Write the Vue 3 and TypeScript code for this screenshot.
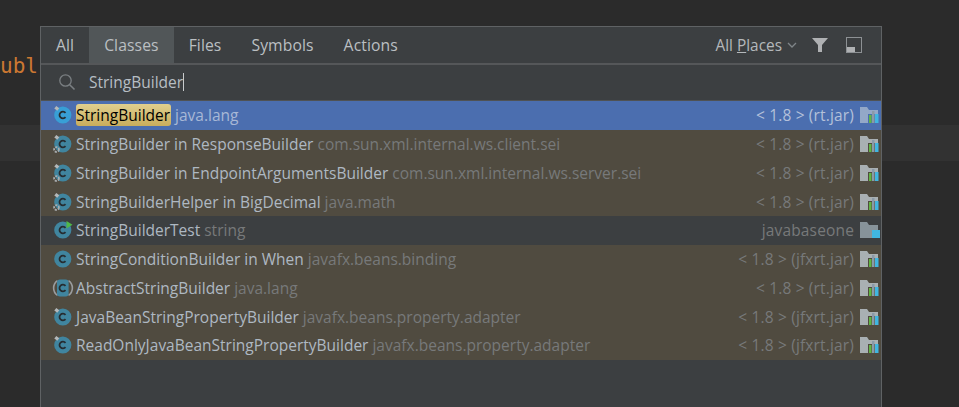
<template>
  <div class="editor">
    <div class="editor__code"><span class="editor__keyword">ubl</span></div>
    <div class="editor__caret-row"></div>

    <div class="popup">
      <header class="popup__tabs">
        <button
          v-for="tab in tabs"
          :key="tab"
          class="tab"
          :class="{ 'tab--active': tab === 'Classes' }"
        >
          {{ tab }}
        </button>
        <div class="popup__tools">
          <span class="scope">All <u>P</u>laces</span>
          <svg class="scope__chevron" width="10" height="6" viewBox="0 0 10 6">
            <path d="M1 1l4 4 4-4" fill="none" stroke="#7f8588" stroke-width="1.3" />
          </svg>
          <svg class="tool-filter" width="16" height="16" viewBox="0 0 16 16">
            <path d="M0 1h16l-6 7v7H6V8z" fill="#afb1b3" />
          </svg>
          <svg class="tool-pin" width="16" height="16" viewBox="0 0 16 16">
            <rect x="0.5" y="0.5" width="15" height="15" fill="none" stroke="#8d9194" />
            <rect x="1" y="10" width="8" height="5" fill="#afb1b3" />
          </svg>
        </div>
      </header>

      <div class="popup__search">
        <svg width="18" height="18" viewBox="0 0 18 18">
          <circle cx="7.5" cy="7.5" r="5.7" fill="none" stroke="#7a7f82" stroke-width="1.3" />
          <path d="M11.7 11.7l4.8 4.8" stroke="#7a7f82" stroke-width="1.6" />
        </svg>
        <span class="popup__query">StringBuilder</span><span class="popup__cursor"></span>
      </div>

      <ul class="results">
        <li
          v-for="row in rows"
          :key="row.name + row.where"
          class="result"
          :class="{
            'result--selected': row.selected,
            'result--project': row.project,
          }"
        >
          <svg class="result__icon" width="22" height="20" viewBox="0 0 22 20">
            <template v-if="row.abstract">
              <path d="M5.5 2.6a9 9 0 0 0 0 14.8M16.5 2.6a9 9 0 0 1 0 14.8" fill="none" stroke="#9a9c9e" stroke-width="1.6" />
              <rect x="5" y="1.5" width="11.6" height="17" rx="3" fill="#40859f" />
            </template>
            <circle v-else cx="10.8" cy="10" r="8.6" :fill="row.selected ? '#389fd6' : '#40859f'" />
            <path d="M13.5 7.8a3.4 3.4 0 1 0 0 4.4" fill="none" stroke="#262c30" stroke-width="1.8" />
            <path v-if="row.project" d="M14.5 1v7.4l6-3.7z" fill="#50b848" />
            <path v-else-if="row.pinned" d="M2.3 3.5l2-2.4 3 2.2-2 2.4z" fill="#b4b8ba" />
            <circle v-if="row.inner" cx="4.5" cy="15.5" r="2.4" fill="none" stroke="#a9adaf" stroke-width="1.8" stroke-dasharray="2 1" />
          </svg>
          <span class="result__name">
            <mark v-if="row.selected" class="result__match">{{ row.name }}</mark>
            <template v-else>{{ row.name }}</template>
          </span>
          <span class="result__where">{{ row.where }}</span>
          <span class="result__lib">{{ row.lib }}</span>
          <svg class="result__folder" width="20" height="20" viewBox="0 0 20 20">
            <path
              d="M0 2h7l2 3h9v13H0z"
              :fill="row.project ? '#87939a' : row.selected ? '#93a8c8' : '#a9b0b3'"
            />
            <rect v-if="row.project" x="12" y="10" width="8" height="8" fill="#40b6e0" />
            <template v-else>
              <rect x="8" y="9" width="12" height="9" :fill="row.selected ? '#4b6eaf' : '#504b40'" />
              <rect x="9" y="10" width="2.5" height="8" fill="#62b543" />
              <rect x="12" y="6" width="2.5" height="12" fill="#8a9aa8" />
              <rect x="15" y="9" width="3.5" height="9" fill="#40b6e0" />
            </template>
          </svg>
        </li>
      </ul>
    </div>
  </div>
</template>

<script setup lang="ts">
type Row = {
  name: string;
  where: string;
  lib: string;
  selected?: boolean;
  project?: boolean;
  abstract?: boolean;
  pinned?: boolean;
  inner?: boolean;
};

const tabs = ['All', 'Classes', 'Files', 'Symbols', 'Actions'];

const rows: Row[] = [
  { name: 'StringBuilder', where: 'java.lang', lib: '< 1.8 > (rt.jar)', selected: true, pinned: true },
  { name: 'StringBuilder in ResponseBuilder', where: 'com.sun.xml.internal.ws.client.sei', lib: '< 1.8 > (rt.jar)', pinned: true, inner: true },
  { name: 'StringBuilder in EndpointArgumentsBuilder', where: 'com.sun.xml.internal.ws.server.sei', lib: '< 1.8 > (rt.jar)', pinned: true, inner: true },
  { name: 'StringBuilderHelper in BigDecimal', where: 'java.math', lib: '< 1.8 > (rt.jar)', pinned: true, inner: true },
  { name: 'StringBuilderTest', where: 'string', lib: 'javabaseone', project: true },
  { name: 'StringConditionBuilder in When', where: 'javafx.beans.binding', lib: '< 1.8 > (jfxrt.jar)' },
  { name: 'AbstractStringBuilder', where: 'java.lang', lib: '< 1.8 > (rt.jar)', abstract: true },
  { name: 'JavaBeanStringPropertyBuilder', where: 'javafx.beans.property.adapter', lib: '< 1.8 > (jfxrt.jar)', pinned: true },
  { name: 'ReadOnlyJavaBeanStringPropertyBuilder', where: 'javafx.beans.property.adapter', lib: '< 1.8 > (jfxrt.jar)', pinned: true },
];
</script>

<style>
html,
body {
  margin: 0;
  background: #2b2b2b;
  overflow: hidden;
}
</style>

<style scoped>
.editor {
  position: relative;
  width: 959px;
  height: 407px;
  overflow: hidden;
  background: #2b2b2b;
  font-family: "Open Sans", "Liberation Sans", sans-serif;
}
.editor__code {
  height: 27px;
  padding-top: 53px;
  font-family: "DejaVu Sans Mono", monospace;
  font-size: 21px;
  line-height: 27px;
}
.editor__keyword {
  color: #cc7832;
}
.editor__caret-row {
  height: 36px;
  margin-top: 45px;
  background: #323232;
}
.popup {
  position: absolute;
  left: 40px;
  top: 26px;
  width: 840px;
  height: 381px;
  display: flex;
  flex-direction: column;
  background: #3c3f41;
  border: solid #5f6264;
  border-width: 1px 1px 0;
}
.popup__tabs {
  display: flex;
  align-items: stretch;
  height: 36px;
  border-bottom: 2px solid #555759;
  flex: none;
}
.tab {
  padding: 0 15px;
  border: 0;
  background: none;
  color: #bbbfc2;
  font: inherit;
  font-size: 15.7px;
  letter-spacing: 0.1px;
}
.tab--active {
  background: #515658;
}
.popup__tools {
  margin-left: auto;
  display: flex;
  align-items: center;
  color: #b4b8bb;
  font-size: 15.4px;
}
.scope__chevron {
  margin-left: 5px;
}
.tool-filter {
  margin-left: 15px;
}
.tool-pin {
  margin: 0 19px 0 18px;
}
.popup__search {
  display: flex;
  align-items: center;
  height: 36px;
  padding-bottom: 1px;
  box-sizing: border-box;
  padding-left: 17px;
  border-bottom: 1px solid #4f5254;
  flex: none;
  color: #b7bec4;
  font-size: 15.5px;
}
.popup__query {
  margin-left: 13px;
}
.popup__cursor {
  width: 1px;
  height: 18px;
  background: #c8cbcd;
}
.results {
  margin: 0;
  padding: 0;
  list-style: none;
}
.result {
  display: flex;
  align-items: center;
  height: 28.75px;
  padding-left: 11px;
  background: #504b40;
  color: #aeb8c2;
  font-size: 15.5px;
  white-space: pre;
}
.result--selected {
  background: #4b6eaf;
}
.result--project {
  background: #3c3f41;
}
.result__icon {
  flex: none;
  margin-right: 2px;
}
.result__match {
  display: inline-block;
  padding: 0 1px 0 0;
  border-radius: 3px;
  background: linear-gradient(#e0cf8e, #c9ad5c);
  color: #000;
}
.result__where {
  margin-left: 4px;
  color: #77797a;
}
.result--selected .result__where {
  color: #a8b8d6;
}
.result__lib {
  margin-left: auto;
  margin-right: 6px;
  color: #77797a;
  letter-spacing: 0.15px;
}
.result--selected .result__lib {
  color: #b4c1da;
}
.result__folder {
  flex: none;
  margin-right: 1px;
}
</style>
